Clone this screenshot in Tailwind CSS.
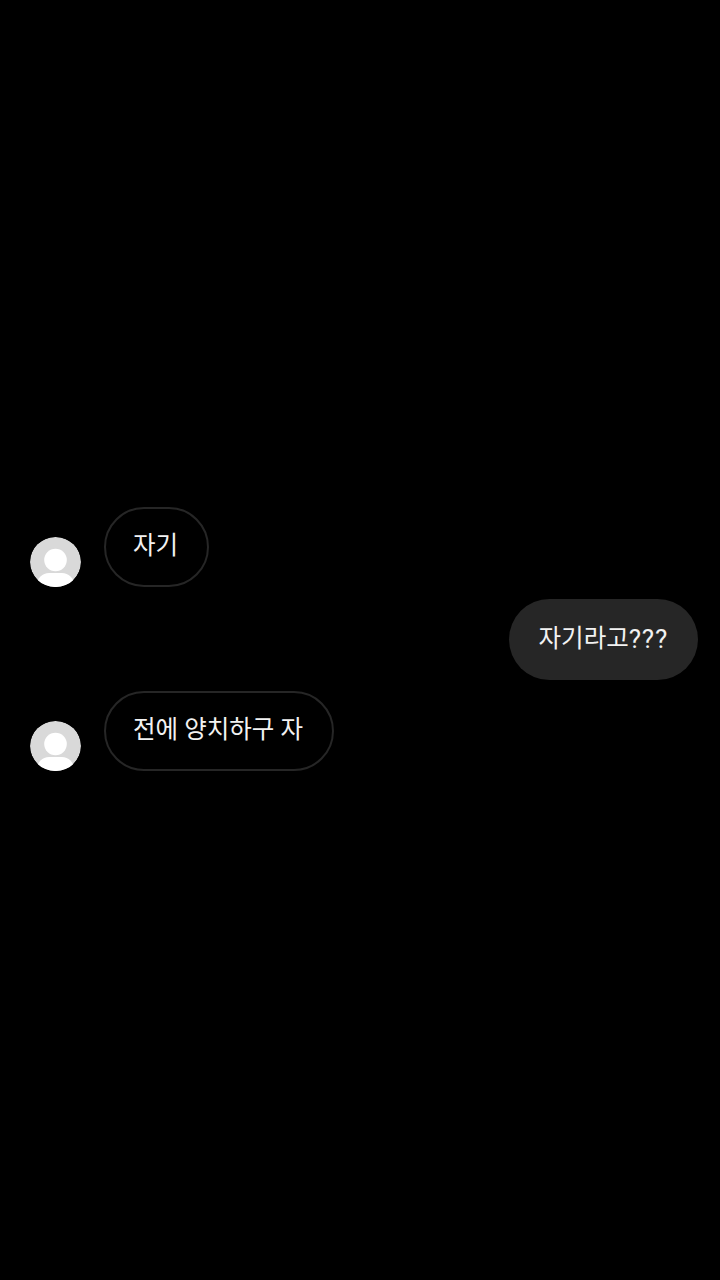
<!DOCTYPE html>
<html lang="ko">
  <head>
    <meta charset="UTF-8" />
    <meta name="viewport" content="width=device-width, initial-scale=1.0" />
    <title>Chat</title>
    <script src="https://cdn.jsdelivr.net/npm/@tailwindcss/browser@4"></script>
  </head>
  <body class="bg-black min-h-screen font-['Roboto','Noto_Sans_CJK_KR',sans-serif]">
    <div class="flex flex-col pt-[507px] pl-[30px] pr-[22px] gap-3 text-[24.5px] text-[#f2f2f2]">
      <!-- Incoming -->
      <div class="flex items-end gap-[23px]">
        <div class="w-[51px] h-[50px] rounded-full overflow-hidden">
          <svg viewBox="0 0 51 50" class="w-full h-full">
            <ellipse cx="25.5" cy="25" rx="25.5" ry="25" fill="#d9d9d9" />
            <circle cx="25.5" cy="23" r="11.3" fill="#ffffff" />
            <rect x="7" y="36" width="37" height="24" rx="12" fill="#ffffff" />
          </svg>
        </div>
        <div class="h-20 pl-[27px] pr-[29px] pb-px flex items-center rounded-full border-2 border-[#262626] bg-black">자기</div>
      </div>

      <!-- Outgoing -->
      <div class="flex justify-end -mb-px">
        <div class="h-[81px] pl-[30px] pr-[30px] pb-px flex items-center rounded-full bg-[#262626]">자기라고<span class="text-[26px] tracking-[0.8px]">???</span></div>
      </div>

      <!-- Incoming -->
      <div class="flex items-end gap-[23px]">
        <div class="w-[51px] h-[50px] rounded-full overflow-hidden">
          <svg viewBox="0 0 51 50" class="w-full h-full">
            <ellipse cx="25.5" cy="25" rx="25.5" ry="25" fill="#d9d9d9" />
            <circle cx="25.5" cy="23" r="11.3" fill="#ffffff" />
            <rect x="7" y="36" width="37" height="24" rx="12" fill="#ffffff" />
          </svg>
        </div>
        <div class="h-20 pl-[27px] pr-[29px] pb-px flex items-center rounded-full border-2 border-[#262626] bg-black">전에 양치하구 자</div>
      </div>
    </div>
  </body>
</html>
